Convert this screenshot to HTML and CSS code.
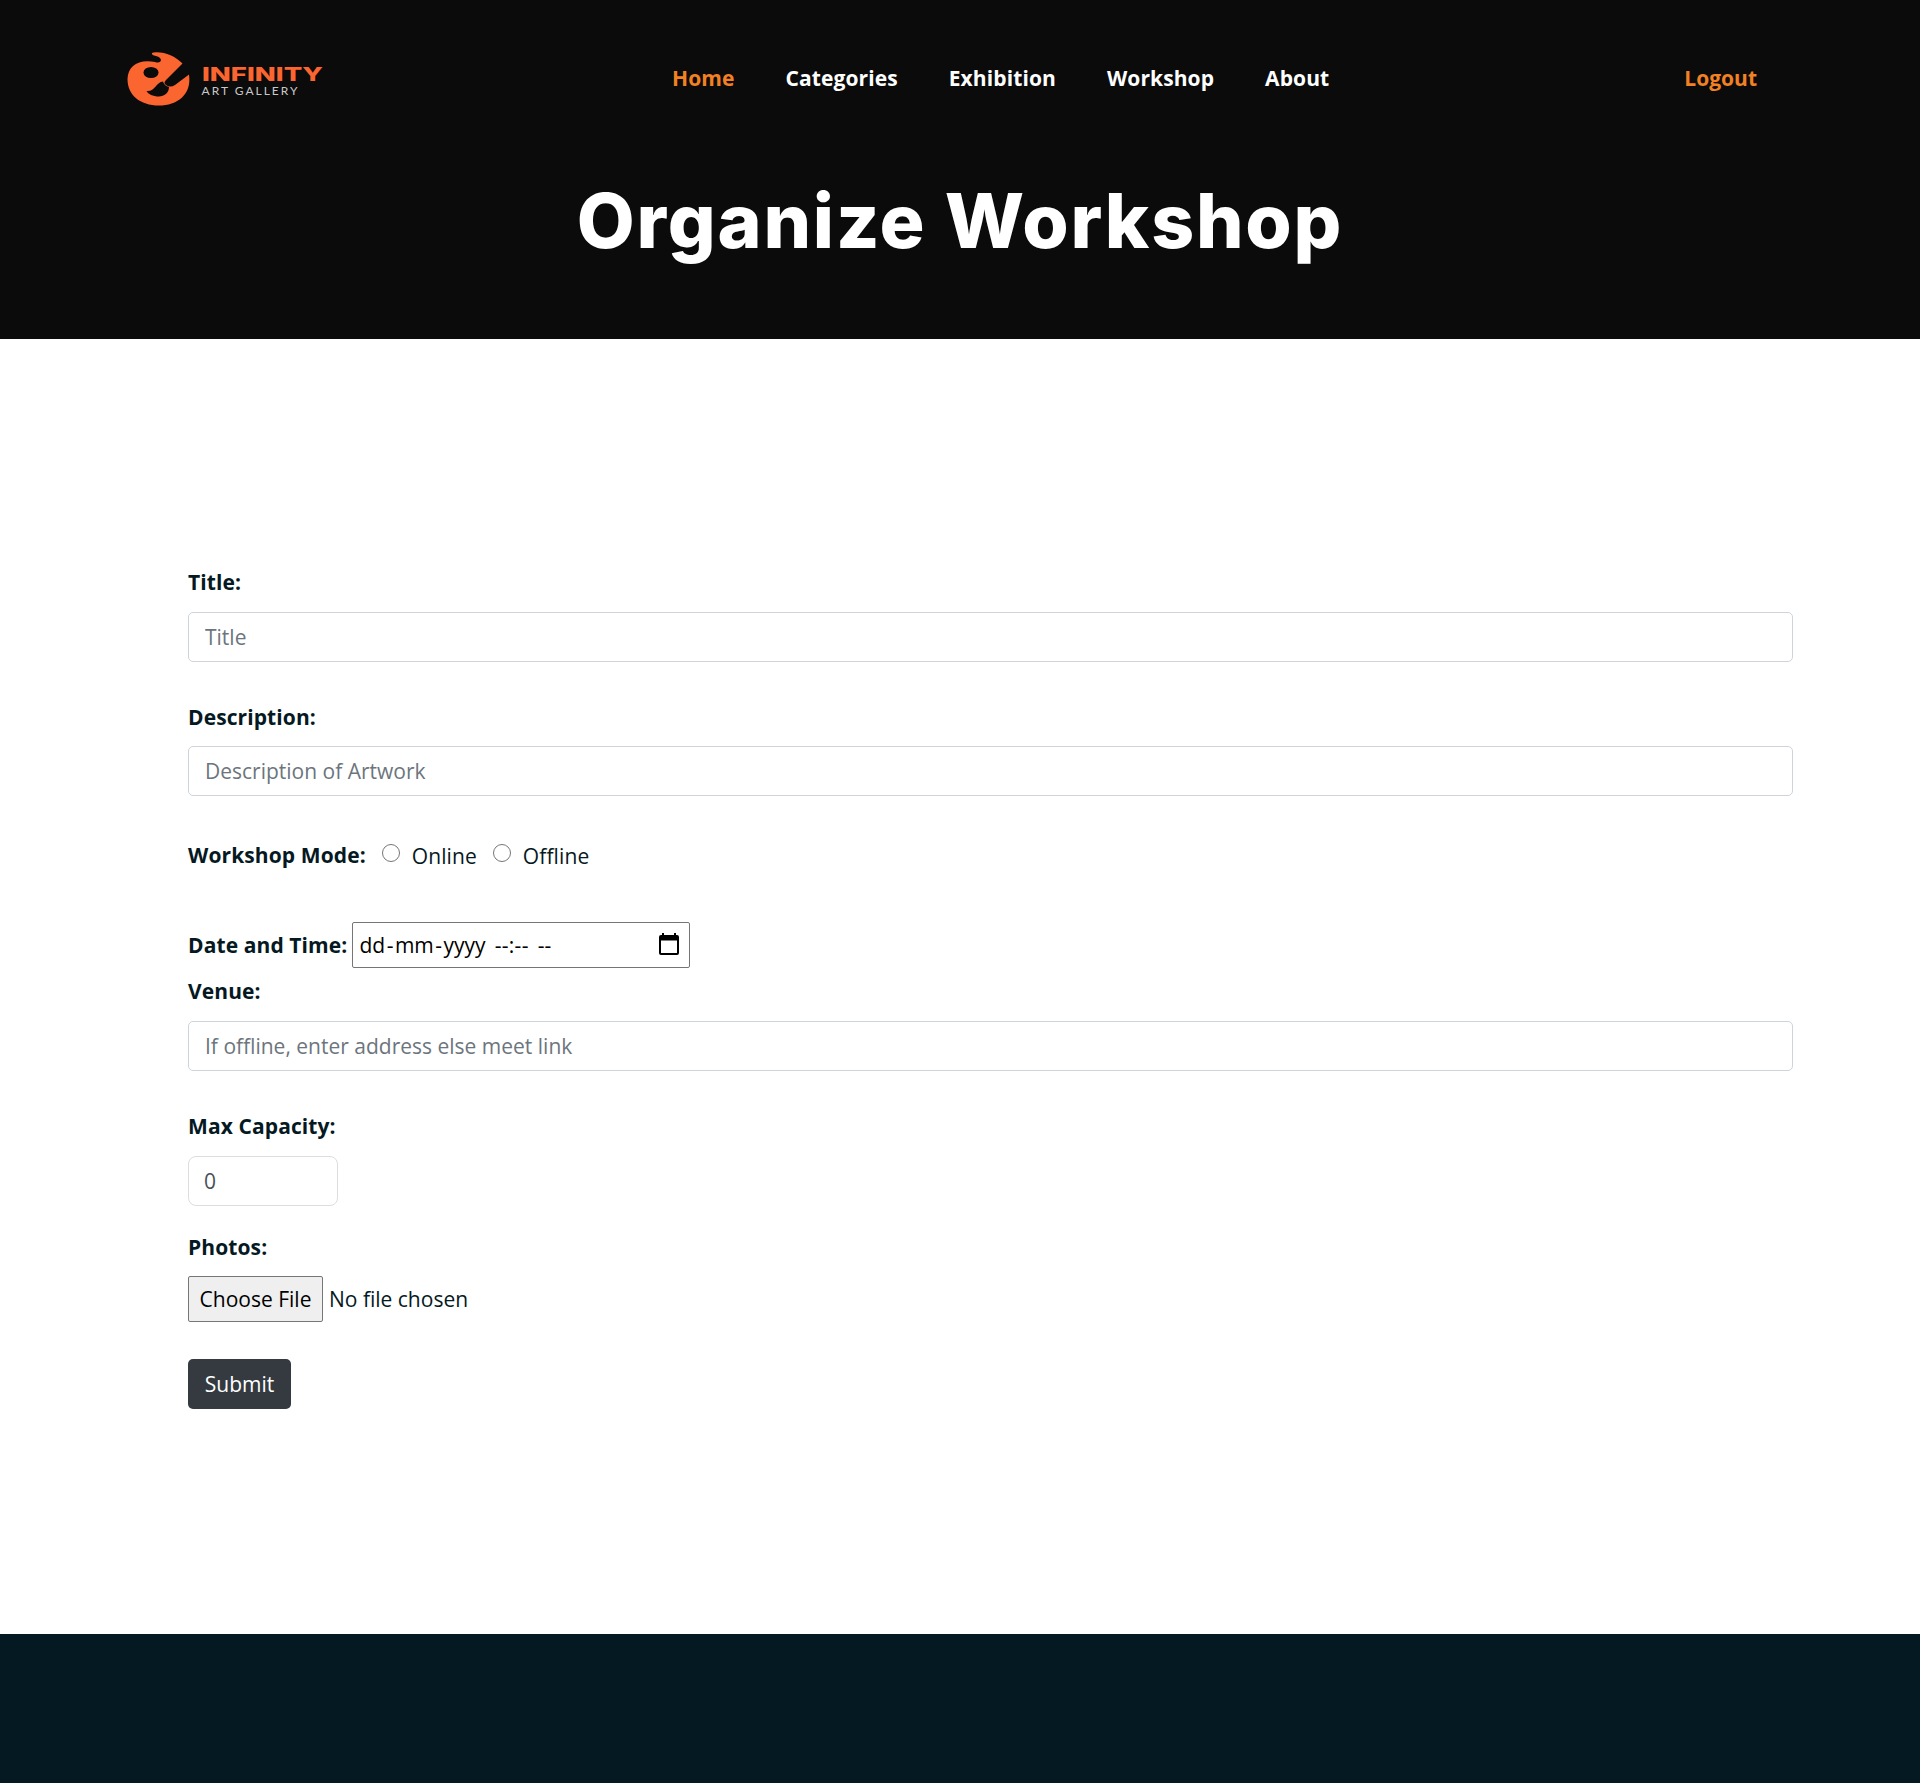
FILE: index.html
```html
<!DOCTYPE html>
<html lang="en">
<head>
<meta charset="utf-8">
<title>Organize Workshop</title>
<link rel="stylesheet" href="styles.css">
</head>
<body>
<header class="header">
  <nav class="navbar">
    <a class="logo" href="#">
      <svg width="200" height="60" viewBox="0 0 200 60">
        <path class="logo-mark" d="M25 1Q26 .2 29 .2C39 0 48 4 55.500 11.500L39 28Q36 31 39 33Q43 36 48 33L62 22.500C65 43 50 53.500 32 53.500C13 53.500 .5 43 .5 27C1 14 11 7 28 10Q33 11.500 34 8.500Q34 5 29 4Q24 3 25 1Z"/>
        <ellipse class="logo-hole" cx="24" cy="20.500" rx="7.500" ry="5.500"/>
        <path class="logo-hole" d="M19.500 39C28 40 29 30 36 29.500C37 32 38 34 42 35C42 41 37 44.500 32 44.500C26 44.500 21 42 19.500 39Z"/>
        <text class="logo-name" x="75" y="28.500" textLength="121" lengthAdjust="spacingAndGlyphs">INFINITY</text>
        <text class="logo-sub" x="74.500" y="43" textLength="96">ART GALLERY</text>
      </svg>
    </a>
    <ul class="menu">
      <li><a class="active" href="#">Home</a></li>
      <li><a href="#">Categories</a></li>
      <li><a href="#">Exhibition</a></li>
      <li><a href="#">Workshop</a></li>
      <li><a href="#">About</a></li>
    </ul>
    <a class="logout" href="#">Logout</a>
  </nav>
  <h1 class="title">Organize Workshop</h1>
</header>
<main class="main">
  <form class="form">
    <div class="group">
      <label class="label" for="title">Title:</label>
      <input class="control" id="title" type="text" placeholder="Title">
    </div>
    <div class="group">
      <label class="label" for="desc">Description:</label>
      <input class="control" id="desc" type="text" placeholder="Description of Artwork">
    </div>
    <div class="mode">
      <span class="label">Workshop Mode:</span>
      <input class="radio" id="on" type="radio" name="mode"><label class="option" for="on">Online</label>
      <input class="radio" id="off" type="radio" name="mode"><label class="option" for="off">Offline</label>
    </div>
    <div class="when">
      <span class="label">Date and Time:</span>
      <div class="datetime">
        <span>dd</span><span class="dash">-</span><span>mm</span><span class="dash">-</span><span class="year">yyyy</span><span class="time">--:--</span><span>--</span>
        <svg class="calendar" width="20" height="22" viewBox="0 0 20 22"><path d="M3 0h2v2h10V0h2v2h1q2 0 2 2v16q0 2-2 2H2q-2 0-2-2V4q0-2 2-2h1zM2 7.500V20h16V7.500z"/></svg>
      </div>
    </div>
    <div class="group">
      <label class="label" for="venue">Venue:</label>
      <input class="control" id="venue" type="text" placeholder="If offline, enter address else meet link">
    </div>
    <div class="group capacity">
      <label class="label" for="cap">Max Capacity:</label>
      <input class="control number" id="cap" type="text" value="0">
    </div>
    <div class="photos">
      <label class="label" for="photos">Photos:</label>
      <div class="file"><button class="choose" id="photos" type="button">Choose File</button><span>No file chosen</span></div>
    </div>
    <button class="submit" type="button">Submit</button>
  </form>
</main>
<footer class="footer"></footer>
</body>
</html>
```

FILE: styles.css
```css
* { box-sizing: border-box; }
body {
  margin: 0;
  min-height: 1783px;
  display: flex;
  flex-direction: column;
  font: 400 21px/30px "Open Sans", sans-serif;
  color: #051922;
  background: #fff;
}
input, button { font: inherit; letter-spacing: inherit; }
a { color: #fff; text-decoration: none; }

.header { height: 339px; background: #0b0b0b; }
.navbar {
  height: 155px;
  padding: 0 163px 0 127px;
  display: grid;
  grid-template-columns: 545px 1fr auto;
  align-items: center;
  font-weight: 700;
}
.logo { display: block; height: 52px; }
.logo-mark, .logo-name { fill: #fb6530; }
.logo-hole { fill: #0b0b0b; }
.logo-name { font: 800 19px Inter, sans-serif; }
.logo-sub { font: 400 12px Lato, sans-serif; fill: #c8c8c8; }
.menu { display: flex; gap: 51px; margin: 0; padding: 0; list-style: none; letter-spacing: .1px; }
.menu .active, .logout { color: #f28123; }
.title {
  margin: 21px 0 0;
  text-align: center;
  font: 800 75px/90px Inter, sans-serif;
  letter-spacing: 1.8px;
  color: #fff;
}

.main { height: 1295px; padding: 228px 127px 0 188px; }
.form { display: flex; flex-direction: column; align-items: stretch; }
.label { display: block; font-weight: 700; letter-spacing: .1px; }
.group { margin-bottom: 40px; }
.group .label { margin-bottom: 14.500px; }
.control {
  display: block;
  width: 100%;
  height: 50px;
  padding: 0 16px;
  border: 1px solid #ced4da;
  border-radius: 5px;
  background: #fff;
  color: #495057;
}
.control::placeholder { color: #6c757d; opacity: 1; }
.mode { display: flex; align-items: center; height: 30px; margin-top: 4px; }
.radio { width: 18px; height: 18px; margin: -5px 12px 0 16px; }
.option { padding-top: 1px; letter-spacing: .1px; }
.when { display: flex; align-items: center; height: 46px; margin: 52px 0 8px; gap: 5px; }
.when .label { margin-top: -1px; }
.datetime {
  display: flex;
  align-items: center;
  width: 338px;
  height: 46px;
  padding: 0 10px 0 6px;
  border: 1px solid #767676;
  border-radius: 2px;
  color: #000;
}
.dash { margin: 0 1.500px; }
.time { margin: 0 9px; letter-spacing: .3px; }
.calendar { margin-left: auto; margin-top: -2px; }
.group.capacity { margin-bottom: 26px; }
.group.capacity .label { margin-bottom: 15.500px; }
.number { width: 150px; padding-left: 15px; border-color: #ddd; border-radius: 8px; }
.file { display: flex; align-items: center; gap: 6px; margin-top: 14px; }
.choose {
  width: 135px;
  height: 46px;
  padding: 0;
  border: 1px solid #767676;
  border-radius: 2px;
  background: #efefef;
  color: #000;
}
.submit {
  width: 103px;
  height: 50px;
  margin-top: 37px;
  padding: 0 0 1px;
  border: 0;
  border-radius: 5px;
  background: #343a40;
  color: #fff;
}
.footer { height: 149px; background: #051922; }
```
